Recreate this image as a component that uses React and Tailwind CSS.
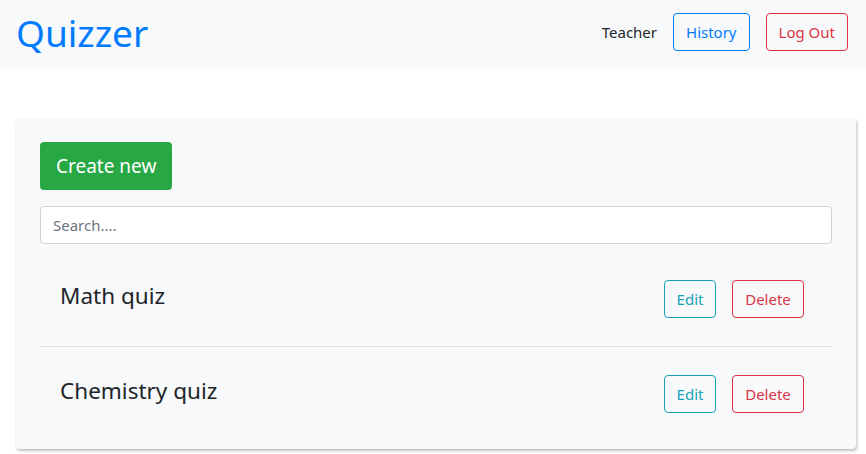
import React, { useState } from "react";

const quizzes = [
  { id: 1, name: "Math quiz" },
  { id: 2, name: "Chemistry quiz" },
];

const App = () => {
  const [search, setSearch] = useState("");

  const shown = quizzes.filter((q) => q.name.toLowerCase().includes(search.toLowerCase()));

  return (
    <div className="min-h-screen bg-white text-[#212529]" style={{ fontFamily: '"Segoe UI", "Noto Sans", sans-serif' }}>
      {/* navbar */}
      <nav className="flex items-center justify-between h-[68px] bg-[#f8f9fa] pl-4 pr-[18px]">
        <div className="text-[37px] leading-none text-[#007bff] pb-[3px]">Quizzer</div>
        <div className="flex items-center gap-4 mb-1">
          <span className="text-[15px]">Teacher</span>
          <button className="h-[38px] px-3 rounded border border-[#007bff] text-[#007bff] text-[15px]">History</button>
          <button className="h-[38px] px-3 rounded border border-[#dc3545] text-[#dc3545] text-[15px]">Log Out</button>
        </div>
      </nav>

      <div className="pt-[50px] pl-4 pr-[10px]">
        <div className="bg-[#f8f9fa] rounded-sm shadow-[1px_2px_3px_rgba(0,0,0,0.25)] px-6 pt-6 pb-2">
          <button className="h-12 px-4 rounded-sm bg-[#28a745] text-white text-[19px]">Create new</button>
          <input
            type="text"
            value={search}
            onChange={(e) => setSearch(e.target.value)}
            placeholder="Search...."
            className="block w-full mt-4 h-[38px] px-3 bg-white border border-[#ced4da] rounded-sm text-[15px] placeholder-[#6c757d] focus:outline-none"
          />
          <div className="pt-[36px]">
            {shown.map((quiz, index) => (
              <div
                key={quiz.id}
                className={
                  "flex items-center justify-between pl-5 pr-7 pb-7 " +
                  (index > 0 ? "pt-7 border-t border-[#dee2e6]" : "")
                }
              >
                <span className="text-[22.5px] leading-[30px] mb-[6px]">{quiz.name}</span>
                <div className="flex gap-4">
                  <button className="h-[38px] w-[52px] rounded-sm border border-[#17a2b8] text-[#17a2b8] text-[15px]">Edit</button>
                  <button className="h-[38px] w-[72px] rounded-sm border border-[#dc3545] text-[#dc3545] text-[15px]">Delete</button>
                </div>
              </div>
            ))}
          </div>
        </div>
      </div>
    </div>
  );
};

export default App;
